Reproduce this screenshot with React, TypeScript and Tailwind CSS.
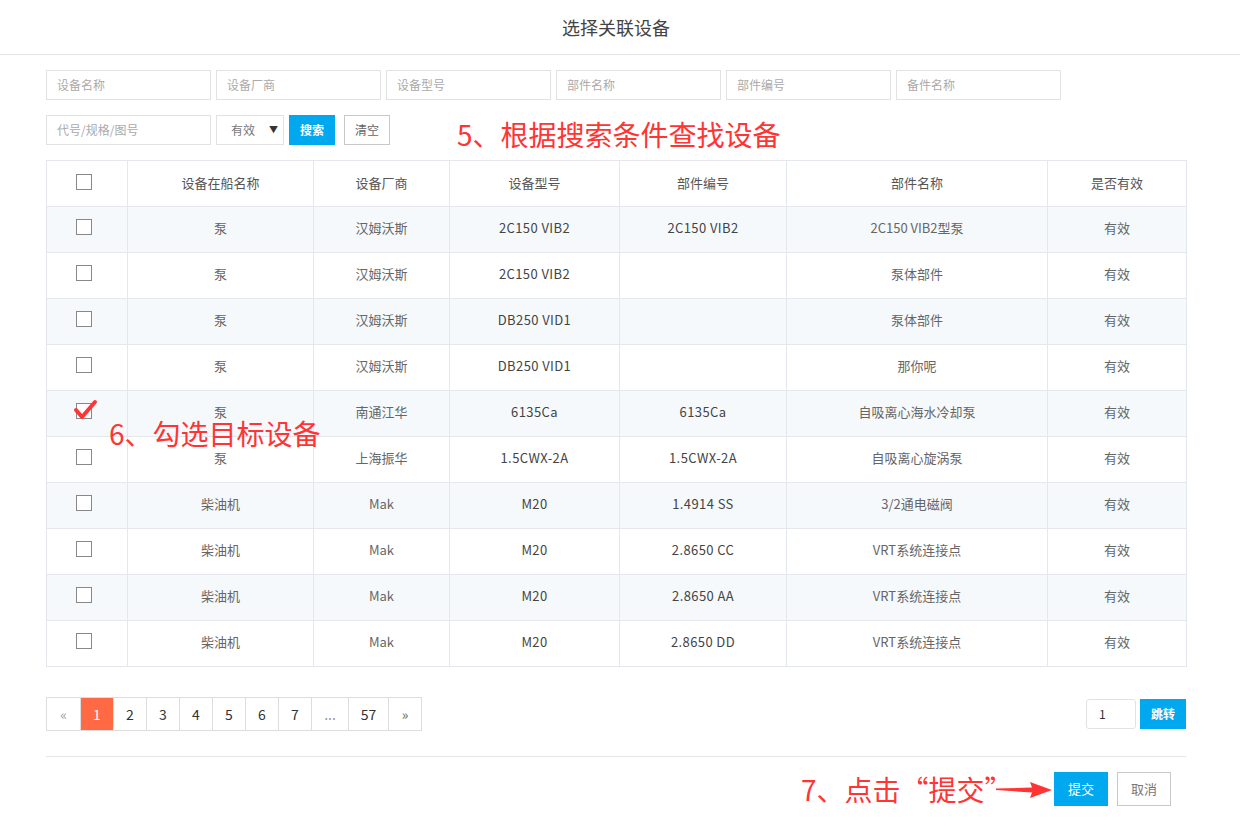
import React from "react";

const font = { fontFamily: '"Noto Sans CJK SC", "Noto Sans", sans-serif' };

const rows = [
  ["泵", "汉姆沃斯", "2C150 VIB2", "2C150 VIB2", "2C150 VIB2型泵", "有效"],
  ["泵", "汉姆沃斯", "2C150 VIB2", "", "泵体部件", "有效"],
  ["泵", "汉姆沃斯", "DB250 VID1", "", "泵体部件", "有效"],
  ["泵", "汉姆沃斯", "DB250 VID1", "", "那你呢", "有效"],
  ["泵", "南通江华", "6135Ca", "6135Ca", "自吸离心海水冷却泵", "有效"],
  ["泵", "上海振华", "1.5CWX-2A", "1.5CWX-2A", "自吸离心旋涡泵", "有效"],
  ["柴油机", "Mak", "M20", "1.4914 SS", "3/2通电磁阀", "有效"],
  ["柴油机", "Mak", "M20", "2.8650 CC", "VRT系统连接点", "有效"],
  ["柴油机", "Mak", "M20", "2.8650 AA", "VRT系统连接点", "有效"],
  ["柴油机", "Mak", "M20", "2.8650 DD", "VRT系统连接点", "有效"],
];

const headers = ["设备在船名称", "设备厂商", "设备型号", "部件编号", "部件名称", "是否有效"];
const colWidths = ["w-[81px]", "w-[186px]", "w-[136px]", "w-[170px]", "w-[167px]", "w-[261px]", "w-[139px]"];

function Box() {
  return <span className="inline-block w-4 h-4 border border-[#888] bg-white align-middle" />;
}

function Field({ ph }: { ph: string }) {
  return (
    <div className="w-[165px] h-[30px] border border-[#e2e2e2] bg-white px-[10px] flex items-center text-[12px] text-[#aaa]">
      {ph}
    </div>
  );
}

export default function App() {
  const pages = [
    { t: "«", w: "w-[33px]", c: "text-[#999]" },
    { t: "1", w: "w-[33px]", a: true },
    { t: "2", w: "w-[33px]" },
    { t: "3", w: "w-[33px]" },
    { t: "4", w: "w-[33px]" },
    { t: "5", w: "w-[33px]" },
    { t: "6", w: "w-[33px]" },
    { t: "7", w: "w-[33px]" },
    { t: "...", w: "w-[37px]", c: "text-[#999]" },
    { t: "57", w: "w-[40px]" },
    { t: "»", w: "w-[33px]", c: "text-[#666]" },
  ];

  return (
    <div className="relative w-[1240px] h-[830px] bg-white text-[#666]" style={font}>
      <div className="h-[55px] border-b border-[#e5e5e5] flex items-center justify-center pr-[8px] text-[18px] text-[#444]">
        选择关联设备
      </div>

      <div className="pl-[46px] pr-[54px] pt-[15px]">
        <div className="flex gap-[5px]">
          {["设备名称", "设备厂商", "设备型号", "部件名称", "部件编号", "备件名称"].map((p) => (
            <Field key={p} ph={p} />
          ))}
        </div>
        <div className="flex mt-[15px] items-center">
          <Field ph="代号/规格/图号" />
          <div className="ml-[5px] w-[68px] h-[30px] border border-[#e2e2e2] flex items-center justify-between pl-[14px] pr-[5px] text-[12px] text-[#777]">
            <span>有效</span>
            <span className="text-[9px] text-[#333]">▼</span>
          </div>
          <button className="ml-[5px] w-[46px] h-[30px] bg-[#00a8f0] text-white text-[12px] font-bold">搜索</button>
          <button className="ml-[9px] w-[46px] h-[30px] border border-[#c8c8c8] bg-white text-[12px] text-[#666]">清空</button>
        </div>

        <table className="mt-[15px] w-[1140px] border-collapse table-fixed text-[13px] text-[#666]">
          <colgroup>
            {colWidths.map((w, i) => (
              <col key={i} className={w} />
            ))}
          </colgroup>
          <thead>
            <tr className="h-[46px]">
              <th className="border border-[#e4e8ec] font-normal text-center pr-[6px] pb-[6px]">
                <Box />
              </th>
              {headers.map((h) => (
                <th key={h} className="border border-[#e4e8ec] font-normal text-center text-[#555] pb-[2px]">
                  {h}
                </th>
              ))}
            </tr>
          </thead>
          <tbody>
            {rows.map((r, i) => (
              <tr key={i} className={`h-[46px] ${i % 2 === 0 ? "bg-[#f5f9fc]" : "bg-white"}`}>
                <td className="border border-[#e4e8ec] text-center pr-[6px] pb-[8px]">
                  <Box />
                </td>
                {r.map((c, j) => (
                  <td
                    key={j}
                    className={`border border-[#e4e8ec] text-center pb-[4px] ${j >= 2 && j <= 3 ? "text-[#444] tracking-[0.4px]" : ""}`}
                  >
                    {c}
                  </td>
                ))}
              </tr>
            ))}
          </tbody>
        </table>

        <div className="mt-[30px] flex justify-between items-center">
          <div className="flex h-[34px] border border-[#ddd]">
            {pages.map((p, i) => (
              <div
                key={i}
                className={`${p.w} h-full flex items-center justify-center text-[14px] ${i > 0 ? "border-l border-[#ddd]" : ""} ${
                  p.a ? "bg-[#ff6a45] text-white" : p.c ?? "text-[#333]"
                }`}
              >
                {p.t}
              </div>
            ))}
          </div>
          <div className="flex items-center gap-[4px]">
            <div className="w-[50px] h-[30px] border border-[#e2e2e2] rounded-[3px] flex items-center pl-[12px] text-[12px] text-[#333]">1</div>
            <button className="w-[46px] h-[30px] bg-[#00a8f0] text-white text-[12px] font-bold">跳转</button>
          </div>
        </div>

        <div className="mt-[25px] border-t border-[#e5e5e5]" />

        <div className="mt-[15px] flex justify-end pr-[15px] gap-[9px]">
          <button className="w-[54px] h-[34px] bg-[#00a8f0] text-white text-[13px]">提交</button>
          <button className="w-[54px] h-[34px] border border-[#c8c8c8] bg-white text-[13px] text-[#777]">取消</button>
        </div>
      </div>

      {/* annotations */}
      <div className="absolute left-[457px] top-[114px] text-[28px] leading-[40px] text-[#ff3434]">5、根据搜索条件查找设备</div>
      <div className="absolute left-[109px] top-[413px] text-[28px] leading-[40px] text-[#ff3434]">6、勾选目标设备</div>
      <svg className="absolute left-[72px] top-[398px]" width="26" height="24" viewBox="0 0 26 24">
        <path d="M4 12 L10 19 L23 4" fill="none" stroke="#ff3434" strokeWidth="4" strokeLinecap="round" strokeLinejoin="round" />
      </svg>
      <div className="absolute left-[801px] top-[769px] text-[28px] leading-[40px] text-[#ff3434]">7、点击“提交”</div>
      <svg className="absolute left-[994px] top-[779px]" width="60" height="22" viewBox="0 0 60 22">
        <path d="M2 9.5 L38 8.5 L36 3 L58 11 L36 19 L38 13.5 L2 11 Z" fill="#ff3434" />
      </svg>
    </div>
  );
}
